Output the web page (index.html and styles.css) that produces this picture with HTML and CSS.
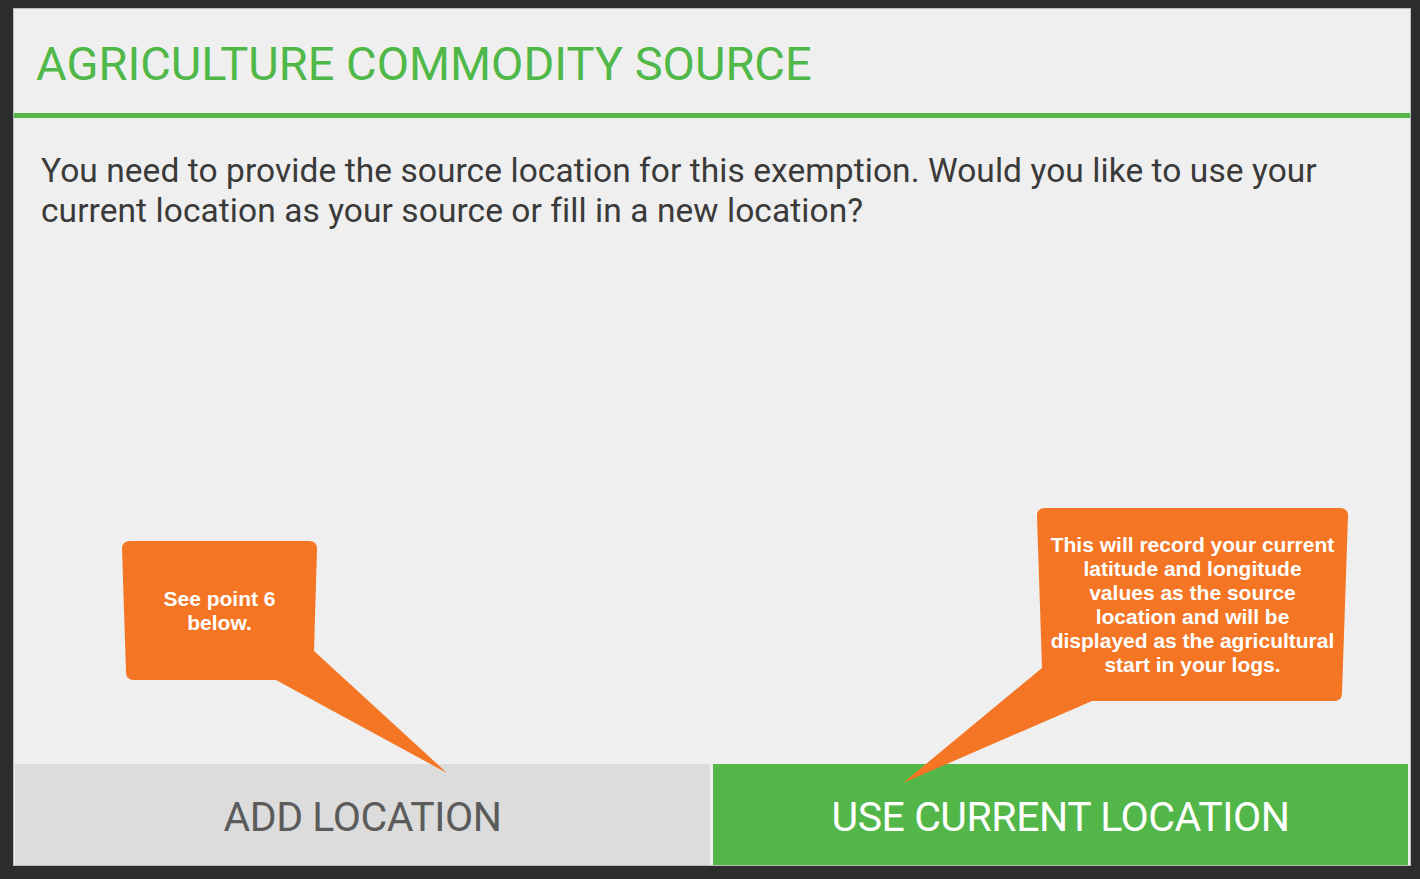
FILE: index.html
```html
<!DOCTYPE html>
<html lang="en">
<head>
  <meta charset="UTF-8" />
  <meta name="viewport" content="width=device-width, initial-scale=1.0" />
  <title>Agriculture Commodity Source</title>
  <link rel="stylesheet" href="styles.css">
</head>
<body>
  <div class="dialog">
    <div class="dialog-header">
      <h1 class="dialog-title">AGRICULTURE COMMODITY SOURCE</h1>
    </div>
    <p class="dialog-message">You need to provide the source location for this exemption. Would you like to use your current location as your source or fill in a new location?</p>
    <div class="dialog-actions">
      <button class="btn btn-secondary">ADD LOCATION</button>
      <button class="btn btn-primary">USE CURRENT LOCATION</button>
    </div>

    <!-- help bubbles -->
    <div class="callout callout-add">
      <svg class="callout-shape" width="340" height="240" viewBox="0 0 340 240">
        <path d="M8,0 L187,0 Q195,0 195,8 L192,110 L325,232 L154,139 L12,139 Q4,139 4,131 L0,8 Q0,0 8,0 Z" />
      </svg>
      <div class="callout-text">See point 6<br>below.</div>
    </div>
    <div class="callout callout-current">
      <svg class="callout-shape" width="460" height="280" viewBox="-140 0 460 280">
        <path d="M8,0 L303,0 Q311,0 311,8 L305,185 Q305,193 297,193 L55,193 L-134,275 L5,160 L0,8 Q0,0 8,0 Z" />
      </svg>
      <div class="callout-text">This will record your current<br>latitude and longitude<br>values as the source<br>location and will be<br>displayed as the agricultural<br>start in your logs.</div>
    </div>
  </div>
</body>
</html>
```

FILE: styles.css
```css
html, body {
  margin: 0;
  height: 100%;
}
body {
  background-color: #2d2d2d;
  padding: 8px 9px 13px 13px;
  box-sizing: border-box;
  font-family: Roboto, "Noto Sans", sans-serif;
}
.dialog {
  position: relative;
  display: flex;
  flex-direction: column;
  height: 100%;
  background-color: #efefef;
  border: 1px solid #bcbcbc;
  box-sizing: border-box;
}
.dialog-header {
  height: 109px;
  border-bottom: 5px solid #52b748;
  display: flex;
  align-items: center;
  padding: 4px 0 0 22px;
  box-sizing: border-box;
}
.dialog-title {
  margin: 0;
  font-size: 47px;
  font-weight: 400;
  line-height: 1;
  color: #4fb848;
}
.dialog-message {
  flex: 1;
  margin: 0;
  padding: 33px 30px 0 27px;
  font-size: 33.5px;
  line-height: 40px;
  letter-spacing: 0.07px;
  color: #3a3a3a;
}
.dialog-actions {
  display: flex;
  gap: 3px;
  height: 101px;
  padding: 0 2px 0 1px;
}
.btn {
  flex: 1;
  border: none;
  padding: 5px 0 0;
  font-family: Roboto, "Noto Sans", sans-serif;
  font-size: 41px;
  letter-spacing: -0.45px;
  cursor: pointer;
}
.btn-secondary {
  background-color: #dcdcdc;
  color: #5b5b5b;
}
.btn-primary {
  background-color: #52b748;
  color: #fff;
}
.callout {
  position: absolute;
  display: flex;
  align-items: center;
  justify-content: center;
}
.callout-shape {
  position: absolute;
  top: 0;
  left: 0;
  overflow: visible;
}
.callout-shape path {
  fill: #f47625;
}
.callout-text {
  position: relative;
  font-family: "Liberation Sans", Arial, sans-serif;
  font-weight: bold;
  font-size: 21px;
  line-height: 24px;
  color: #fff;
  text-align: center;
  white-space: nowrap;
}
.callout-add {
  left: 108px;
  top: 532px;
  width: 195px;
  height: 139px;
}
.callout-current {
  left: 1023px;
  top: 499px;
  width: 311px;
  height: 193px;
}
.callout-current .callout-shape {
  left: -140px;
}
```
